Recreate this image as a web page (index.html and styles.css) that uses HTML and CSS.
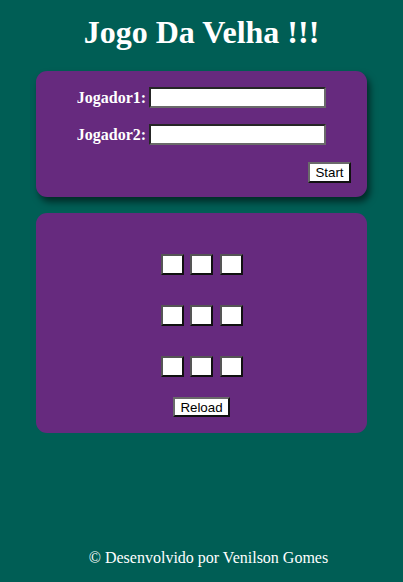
FILE: index.html
```html
<!DOCTYPE html>
<html lang="pt">
<head>
<meta charset="utf-8">
<title>Jogo Da Velha</title>
<link rel="stylesheet" href="styles.css">
</head>
<body>
<div class="page">
  <h1 class="title">Jogo Da Velha !!!</h1>
  <section class="card card-players">
    <div class="row">
      <label class="label" for="p1">Jogador1:</label>
      <input class="field" id="p1" type="text">
    </div>
    <div class="row">
      <label class="label" for="p2">Jogador2:</label>
      <input class="field" id="p2" type="text">
    </div>
    <div class="actions">
      <button class="btn btn-start">Start</button>
    </div>
  </section>
  <section class="card card-board">
    <div class="board">
      <div class="board-row"><span class="cell"></span><span class="cell"></span><span class="cell"></span></div>
      <div class="board-row"><span class="cell"></span><span class="cell"></span><span class="cell"></span></div>
      <div class="board-row"><span class="cell"></span><span class="cell"></span><span class="cell"></span></div>
    </div>
    <button class="btn btn-reload">Reload</button>
  </section>
  <footer class="footer">© Desenvolvido por Venilson Gomes</footer>
</div>
</body>
</html>
```
FILE: styles.css
```css
html, body {
  margin: 0;
  padding: 0;
  background: #005e55;
}
body {
  font-family: "Liberation Serif", "Times New Roman", serif;
  color: #fff;
}
.page {
  width: 403px;
  height: 582px;
  display: flex;
  flex-direction: column;
  align-items: center;
  box-sizing: border-box;
  padding-top: 14px;
}
.title {
  margin: 0;
  font-size: 32px;
  font-weight: bold;
  line-height: 37px;
  height: 37px;
}
.card {
  width: 331px;
  box-sizing: border-box;
  background: #662a7e;
  border-radius: 11px;
}
.card-players {
  margin-top: 20px;
  height: 126px;
  padding: 16px 15px 15px 15px;
  box-shadow: 3px 5px 7px rgba(0, 0, 0, 0.55);
  display: flex;
  flex-direction: column;
  align-items: center;
}
.row {
  display: flex;
  align-items: center;
  gap: 3px;
  height: 21px;
}
.row + .row {
  margin-top: 16px;
}
.label {
  font-family: "Liberation Serif", "Times New Roman", serif;
  font-weight: bold;
  font-size: 16px;
}
.field {
  width: 177px;
  height: 21px;
  box-sizing: border-box;
  border: 2px solid;
  border-color: #262626 #6a6a6a #6a6a6a #262626;
  background: #fff;
  padding: 1px 2px;
  margin: 0;
  outline: none;
}
.actions {
  align-self: stretch;
  display: flex;
  justify-content: flex-end;
  margin-top: 17px;
  padding-right: 1px;
}
.btn {
  font-family: "Liberation Sans", Arial, sans-serif;
  font-size: 13.33px;
  color: #000;
  background: #fff;
  border: 2px solid;
  border-color: #6a6a6a #111 #111 #6a6a6a;
  box-sizing: border-box;
  padding: 0;
  margin: 0;
  line-height: 15px;
}
.btn-start {
  width: 43px;
  height: 21px;
}
.card-board {
  margin-top: 16px;
  height: 220px;
  padding-top: 41px;
  display: flex;
  flex-direction: column;
  align-items: center;
}
.board {
  display: flex;
  flex-direction: column;
  gap: 30px;
}
.board-row {
  display: flex;
  gap: 6.5px;
  height: 21px;
}
.cell {
  width: 23px;
  height: 21px;
  box-sizing: border-box;
  background: #fff;
  border: 2px solid;
  border-color: #555 #111 #111 #555;
}
.btn-reload {
  margin-top: 20px;
  width: 57px;
  height: 20px;
}
.footer {
  font-family: "Liberation Serif", "Times New Roman", serif;
  margin-top: auto;
  margin-bottom: 15px;
  padding-left: 14px;
  font-size: 16px;
  line-height: 18px;
}
```
